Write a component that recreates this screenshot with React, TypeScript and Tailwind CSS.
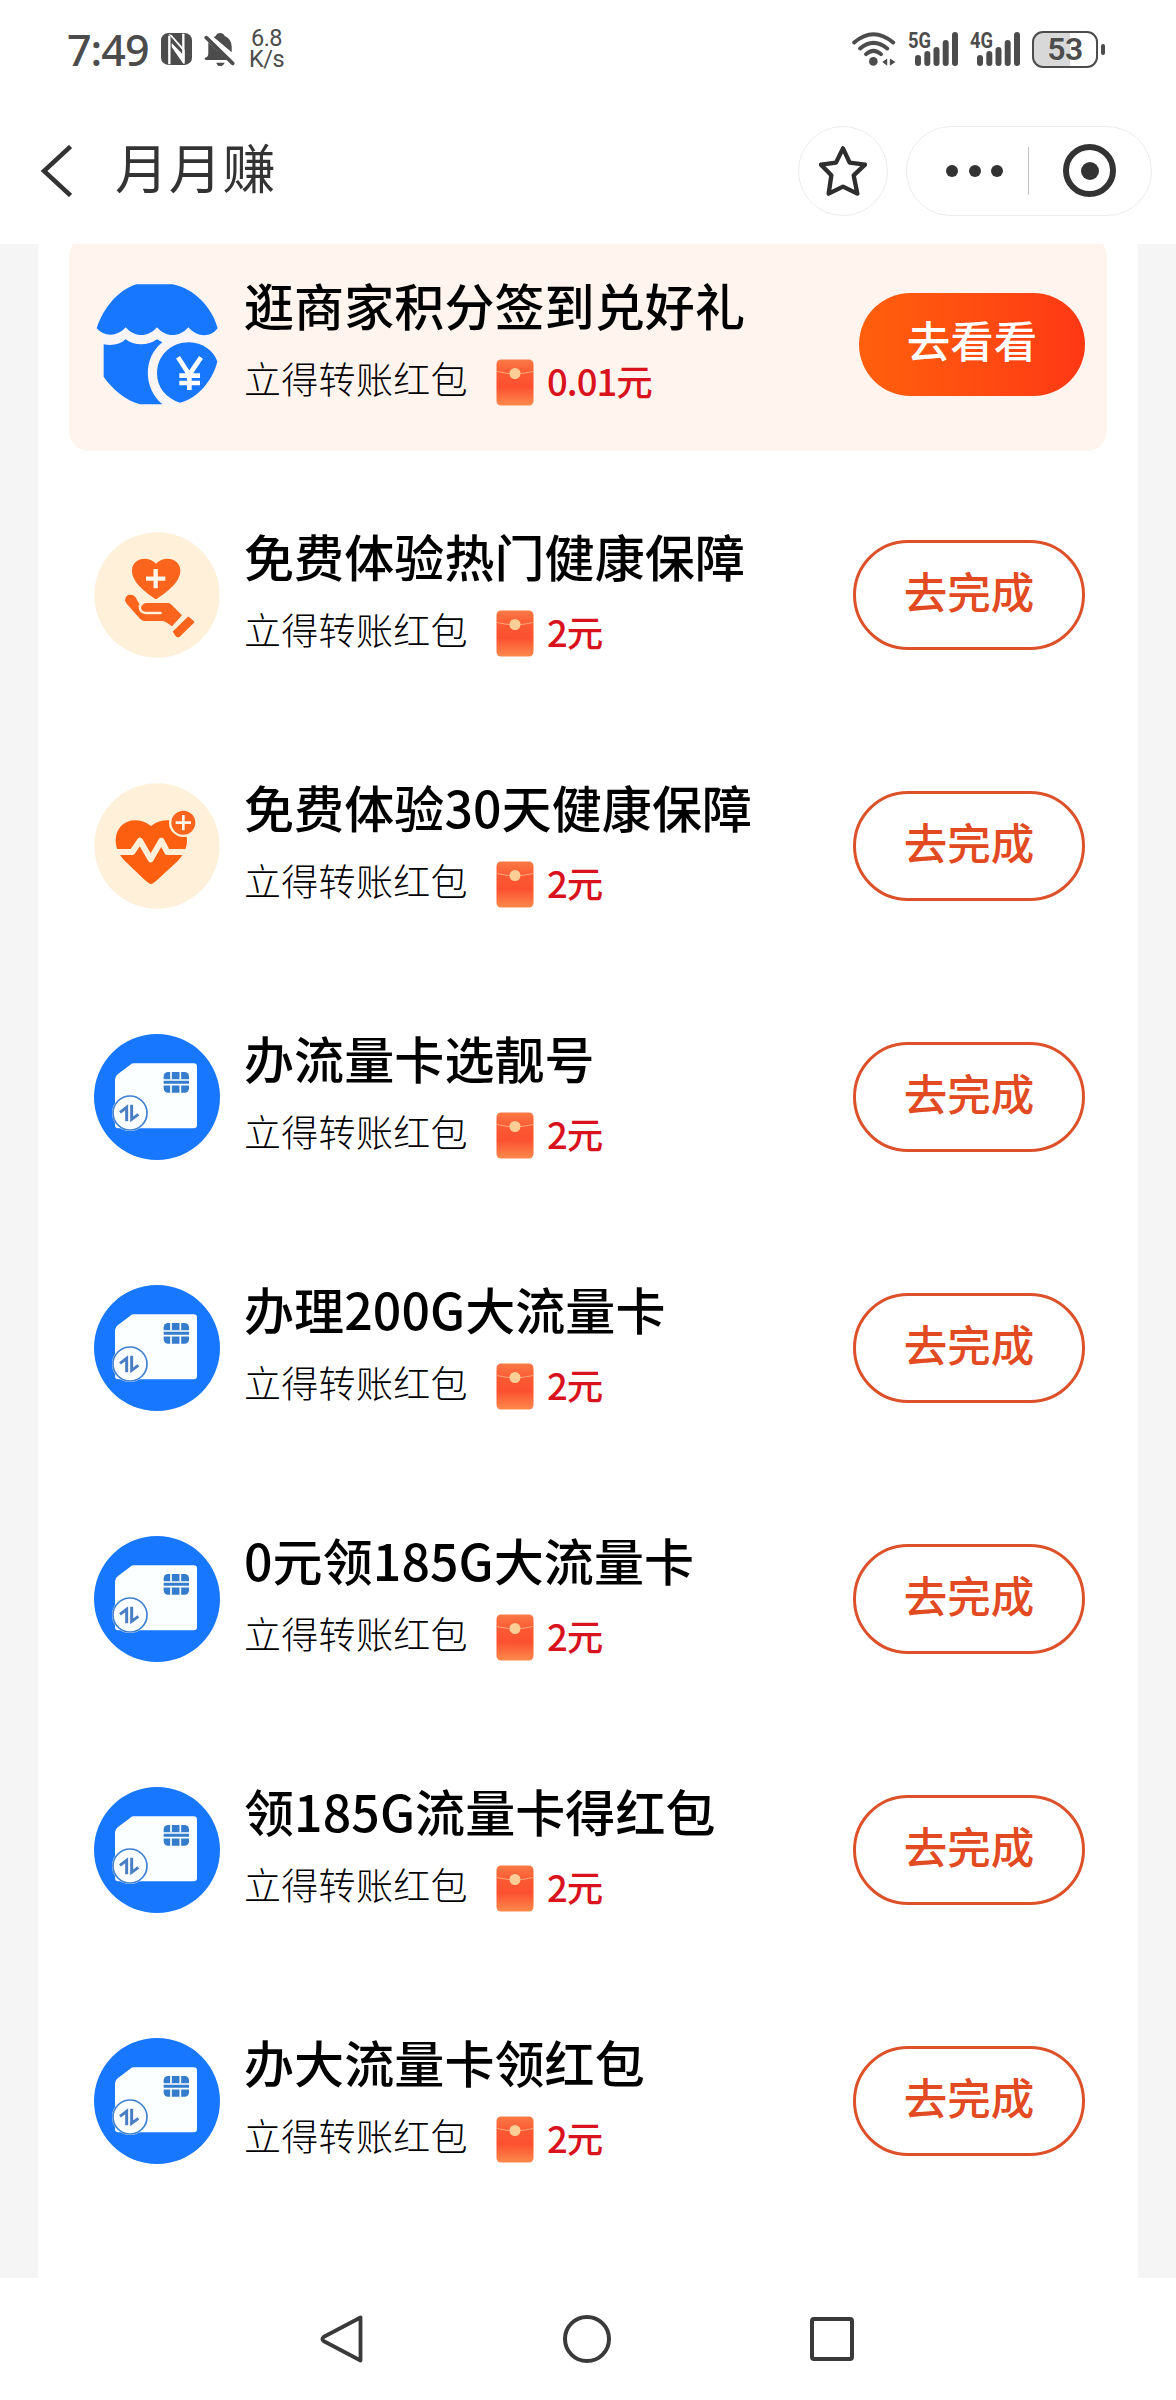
type IconName = "store" | "hand" | "pulse" | "sim";

interface Task {
    title: string;
    amount: string;
    icon: IconName;
    highlight?: boolean;
}

const tasks: Task[] = [
    { title: "逛商家积分签到兑好礼", amount: "0.01元", icon: "store", highlight: true },
    { title: "免费体验热门健康保障", amount: "2元", icon: "hand" },
    { title: "免费体验30天健康保障", amount: "2元", icon: "pulse" },
    { title: "办流量卡选靓号", amount: "2元", icon: "sim" },
    { title: "办理200G大流量卡", amount: "2元", icon: "sim" },
    { title: "0元领185G大流量卡", amount: "2元", icon: "sim" },
    { title: "领185G流量卡得红包", amount: "2元", icon: "sim" },
    { title: "办大流量卡领红包", amount: "2元", icon: "sim" },
];

const StoreIcon = () => (
    <svg viewBox="0 0 378 378" className="size-[126px]">
        <path d="M20 140H350V200L300 190L190 200L170 270L205 330L258 368L205 372L161 277L190 180L29 190Z" fill="#f7f5f8" />
        <g fill="#1777ff">
            <path d="M8 142C28 80 75 25 128 10H236C300 22 355 80 371 142C350 170 310 170 283 139C256 170 216 170 189 139C162 170 122 170 95 139C70 168 30 168 8 142Z" />
            <path d="M29 190C55 195 80 190 95 175C120 195 162 195 189 175L205 184C147 230 147 320 205 370H138C95 358 55 325 29 287Z" />
            <path d="M189 277C189 222 232 184 285 184C325 184 360 210 370 242C355 300 310 352 258 365C215 352 189 318 189 277Z" />
        </g>
        <path d="M252 229L286 281L321 229M286 277V327M256 284H318M256 306H318" fill="none" stroke="#fff" strokeWidth="14" />
    </svg>
);

const HandIcon = () => (
    <svg viewBox="0 0 378 378" className="size-[126px]">
        <circle cx="189" cy="189" r="188" fill="#fff0d9" />
        <path d="M186 202C165 187 114 155 114 116C114 80 160 68 186 95C212 68 259 80 259 116C259 155 207 187 186 202Z" fill="#fb641c" />
        <path d="M185 111V169M156 140H214" stroke="#fff6ea" strokeWidth="13" />
        <g fill="#fb641c">
            <path d="M94 206C92 186 117 183 126 198L141 226C146 216 150 213 158 213H222Q227 213 231 217L264 250L234 283L215 270Q210 267 204 267H152Q144 267 138 260L98 215Z" />
            <path d="M283 257L298 270L255 312Q250 315 246 309L240 299Z" stroke="#fb641c" strokeWidth="6" strokeLinejoin="round" />
            <path d="M96 207Q100 192 116 194L142 230L150 262Z" stroke="#fb641c" strokeWidth="4" />
        </g>
        <path d="M137 222Q138 243 156 243H200" fill="none" stroke="#fff0d9" strokeWidth="7" strokeLinecap="round" />
    </svg>
);

const PulseIcon = () => (
    <svg viewBox="0 0 378 378" className="size-[126px]">
        <circle cx="189" cy="189" r="188" fill="#fff0d9" />
        <path d="M171 303Q165 303 150 289L92 233C76 216 65 196 65 172C65 120 120 92 171 129C222 92 279 120 279 172C279 196 268 216 252 233L192 289Q177 303 171 303Z" fill="#fd5f10" />
        <path d="M60 207H115L138 173L170 229L202 173L220 207H284" fill="none" stroke="#fff0d9" strokeWidth="18" strokeLinejoin="round" />
        <circle cx="268" cy="119" r="43" fill="#fff0d9" />
        <circle cx="268" cy="119" r="36" fill="#fb641c" />
        <path d="M268 96V142M245 119H291" stroke="#fff6ea" strokeWidth="8" />
    </svg>
);

const SimIcon = () => (
    <svg viewBox="0 0 378 378" className="size-[126px]">
        <circle cx="189" cy="189" r="189" fill="#1777ff" />
        <path d="M118 88H299Q309 88 309 98V273Q309 283 299 283H73Q63 283 63 273V136Q63 126 72 120L108 93Q112 88 118 88Z" fill="#fcffff" />
        <rect x="209" y="114" width="76" height="62" rx="13" fill="#357ccc" />
        <path d="M231 112V136M259 112V136M231 154V178M259 154V178" stroke="#fcffff" strokeWidth="5" />
        <path d="M207 138H287M207 152H287" stroke="#fcffff" strokeWidth="5" />
        <circle cx="108" cy="237" r="54" fill="#fcffff" />
        <circle cx="108" cy="237" r="51" fill="none" stroke="#3e7fd0" strokeWidth="5" />
        <path d="M78 235L98 220V262M113 212V256L133 241" fill="none" stroke="#4a7ec4" strokeWidth="9" />
    </svg>
);

const icons = {
    store: StoreIcon,
    hand: HandIcon,
    pulse: PulseIcon,
    sim: SimIcon,
};

const RedPacket = () => (
    <svg viewBox="0 0 38 47" className="h-[47px] w-[38px] shrink-0">
        <defs>
            <linearGradient id="packet" x1="0" y1="0" x2="0" y2="1">
                <stop offset="0" stopColor="#f97a45" />
                <stop offset="0.3" stopColor="#fb5a34" />
                <stop offset="0.6" stopColor="#fb5030" />
                <stop offset="1" stopColor="#fd8a4c" />
            </linearGradient>
        </defs>
        <rect x="0.5" y="0.5" width="37" height="46" rx="4.5" fill="url(#packet)" />
        <path d="M1 12.5Q19 17 37 12.5" fill="none" stroke="#fba77a" strokeWidth="1" />
        <circle cx="19" cy="14.5" r="5.5" fill="#fdcf96" />
    </svg>
);

const Signal = ({ label }: { label: string }) => (
    <svg viewBox="0 0 50 36" className="h-9 w-[50px] overflow-visible" fill="#4c4c4c">
        <text x="0" y="16.5" fontSize="22" fontWeight="700" textLength="23" lengthAdjust="spacingAndGlyphs" className="font-['Roboto',sans-serif]">
            {label}
        </text>
        <rect x="7" y="24" width="6" height="11" rx="3" />
        <rect x="16.3" y="20" width="6" height="15" rx="3" />
        <rect x="25.5" y="16" width="6" height="19" rx="3" />
        <rect x="34.7" y="9" width="6" height="26" rx="3" />
        <rect x="44" y="1" width="6" height="34" rx="3" />
    </svg>
);

const StatusBar = () => (
    <div className="flex h-[98px] shrink-0 items-center pl-[67px] pr-[71px] text-[#4c4c4c]">
        <span className="w-[94px] font-['Noto_Sans',sans-serif] text-[43px] font-medium leading-none tracking-[-1px]">7:49</span>
        {/* NFC */}
        <svg viewBox="0 0 93 96" className="h-8 w-[31px]">
            <rect width="93" height="96" rx="22" fill="#4c4c4c" />
            <path d="M25 94V8M67 88V2" stroke="#fff" strokeWidth="7" />
            <path d="M22 2L67 54V66L32 30V42L67 92H71V50L32 6Z" fill="#fff" />
        </svg>
        {/* Muted bell */}
        <svg viewBox="0 0 92 100" className="ml-3 h-[33px] w-[31px]" fill="#4c4c4c">
            <path d="M34 10Q38 0 48 0Q58 0 61 8Q83 18 83 42V58L28 12Z" />
            <path d="M12 28L70 82H4Q-2 76 4 74Q12 72 12 62Z" />
            <path d="M6 14L86 92" stroke="#4c4c4c" strokeWidth="11" strokeLinecap="round" />
            <path d="M36 90H62Q56 101 48 101Q40 101 36 90Z" />
        </svg>
        <div className="ml-3.5 flex flex-col items-center font-['Roboto',sans-serif] text-[23.5px] leading-[21px] tracking-[-0.5px]">
            <span>6.8</span>
            <span>K/s</span>
        </div>
        <div className="ml-auto flex items-center">
            <svg viewBox="0 0 132 106" className="mr-3 h-[35px] w-11" fill="none" stroke="#4c4c4c" strokeWidth="12" strokeLinecap="round">
                <path d="M6 32Q64 -18 124 32M24 50Q64 16 106 50M42 67Q64 47 87 67" />
                <circle cx="64" cy="89" r="13" fill="#4c4c4c" stroke="none" />
                <path d="M91 91L106 80V102ZM114 80L131 91L114 102Z" fill="#4c4c4c" stroke="none" />
            </svg>
            <Signal label="5G" />
            <div className="w-3" />
            <Signal label="4G" />
            <div className="ml-3 flex h-[37px] w-[66px] items-center justify-center rounded-[11px] border-[2.5px] border-[#4c4c4c] bg-linear-to-r from-[#d8d8d8] from-58% to-white to-58% font-['Roboto',sans-serif] text-[32px] font-semibold leading-none tracking-[-0.5px]">
                53
            </div>
            <div className="ml-[3px] h-[11px] w-1 rounded-full bg-[#4c4c4c]" />
        </div>
    </div>
);

const Header = () => (
    <div className="flex h-[146px] shrink-0 items-center pl-10 pr-6">
        <svg viewBox="0 0 32 52" className="h-[52px] w-8" fill="none" stroke="#333" strokeWidth="4.5">
            <path d="M30.5 1.5L4 26L30.5 50.5" />
        </svg>
        <h1 className="mb-[9px] ml-[43px] text-[53px] leading-none tracking-[0.8px] text-[#333]">月月赚</h1>
        <div className="ml-auto flex size-[90px] items-center justify-center rounded-full border border-[#ececec]">
            <svg viewBox="0 0 144 150" className="h-[50px] w-12" fill="none" stroke="#2e2e2e" strokeWidth="13" strokeLinejoin="round">
                <path d="M72 7L92 50L138 56L104 88L115 143L72 122L29 143L37 88L6 56L51 50Z" />
            </svg>
        </div>
        <div className="ml-[18px] flex h-[90px] w-[246px] items-center rounded-full border border-[#ececec] pl-[39px]">
            <div className="flex gap-[10.5px]">
                <span className="size-3 rounded-full bg-[#333]" />
                <span className="size-3 rounded-full bg-[#333]" />
                <span className="size-3 rounded-full bg-[#333]" />
            </div>
            <div className="ml-[25px] h-12 w-px bg-[#c4c4c4]" />
            <div className="mb-px ml-[34px] flex size-[53px] items-center justify-center rounded-full border-6 border-[#333]">
                <span className="size-[18px] rounded-full bg-[#333]" />
            </div>
        </div>
    </div>
);

const TaskRow = ({ title, amount, icon, highlight }: Task) => {
    const Icon = icons[icon];

    return (
        <div
            className={`flex h-[214px] shrink-0 items-center rounded-[20px] pl-[25px] pr-[22px] ${
                highlight ? "bg-[#fff5ee]" : "bg-white"
            }`}
        >
            <Icon />
            <div className="ml-6 flex h-full flex-col pt-[42px]">
                <h2 className="whitespace-nowrap text-[50px] font-medium leading-none tracking-[0.1px] text-black">{title}</h2>
                <div className="mt-[30px] flex items-start">
                    <span className="w-[252px] text-[37px] font-light leading-[39px] tracking-[0.3px] text-black">立得转账红包</span>
                    <RedPacket />
                    <span className="ml-[13px] text-[36.5px] font-medium leading-[44px] tracking-[-1px] text-[#d8131d]">{amount}</span>
                </div>
            </div>
            {highlight ? (
                <button className="ml-auto h-[103px] w-[226px] rounded-full bg-linear-to-r from-[#ff5f0c] to-[#ff3714] pb-[9px] text-[43.5px] font-medium leading-none text-white">
                    去看看
                </button>
            ) : (
                <button className="ml-auto h-[110px] w-[232px] rounded-full border-3 border-[#dc5129] pb-[9px] text-[43.5px] font-medium leading-none text-[#e24a22]">
                    去完成
                </button>
            )}
        </div>
    );
};

const NavBar = () => (
    <div className="flex h-[122px] shrink-0 items-center justify-between bg-white pl-[320px] pr-[322px]">
        <svg viewBox="0 0 44 50" className="h-[50px] w-11" fill="none" stroke="#3a3a3a" strokeWidth="3.8" strokeLinejoin="round">
            <path d="M40.5 3.5V46.5L3.5 27Q1.5 25 3.5 23Z" />
        </svg>
        <span className="size-12 rounded-full border-4 border-[#3a3a3a]" />
        <span className="size-11 rounded-[4px] border-4 border-[#3a3a3a]" />
    </div>
);

const App = () => {
    return (
        <div className="flex h-[2400px] w-[1176px] flex-col overflow-hidden bg-white font-['Noto_Sans_CJK_SC',sans-serif]">
            <StatusBar />
            <Header />
            <div className="min-h-0 flex-1 overflow-hidden bg-[#f5f5f5] px-[38px]">
                <div className="h-full overflow-hidden bg-white px-[31px]">
                    {/* list is scrolled a few pixels under the header */}
                    <div className="-mt-[7px] flex flex-col gap-[37px]">
                        {tasks.map((task) => (
                            <TaskRow key={task.title} {...task} />
                        ))}
                    </div>
                </div>
            </div>
            <NavBar />
        </div>
    );
};

export default App;
